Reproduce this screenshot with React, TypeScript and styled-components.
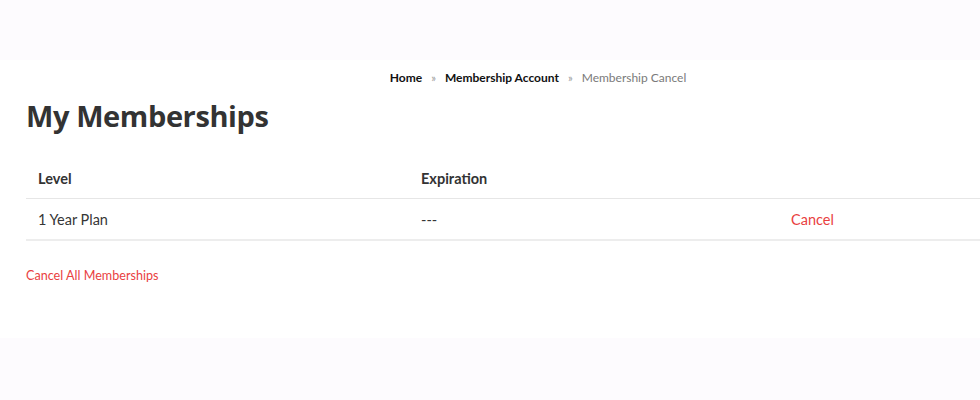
import React from "react";
import styled, { createGlobalStyle } from "styled-components";

const Global = createGlobalStyle`
  html, body { margin: 0; padding: 0; background: #fdfbfe; overflow-x: hidden; }
  body { font-family: Lato, "Liberation Sans", sans-serif; color: #333; }
  * { box-sizing: border-box; }
`;

const Page = styled.div`
  display: flex;
  flex-direction: column;
  width: 980px;
  height: 400px;
  overflow: hidden;
`;

const TopBand = styled.div`
  height: 60px;
  background: #fdfbfe;
  flex-shrink: 0;
`;

const Main = styled.main`
  background: #ffffff;
  height: 278px;
  flex-shrink: 0;
  overflow: hidden;
`;

const Container = styled.div`
  width: 1024px;
  margin-left: 26px;
  display: flex;
  flex-direction: column;
`;

const Breadcrumb = styled.nav`
  display: flex;
  justify-content: center;
  align-items: center;
  gap: 9px;
  padding-top: 9px;
  height: 26px;
  font-size: 12px;
  font-family: Lato, sans-serif;
`;

const Crumb = styled.span<{ $current?: boolean }>`
  color: ${(p) => (p.$current ? "#7a7a7a" : "#111")};
  font-weight: ${(p) => (p.$current ? 400 : 700)};
`;

const Sep = styled.span`
  color: #999;
  font-size: 11px;
`;

const Title = styled.h1`
  margin: 10px 0 0;
  font-family: "Open Sans", sans-serif;
  font-weight: 700;
  font-size: 29px;
  line-height: 40px;
  color: #333;
  letter-spacing: -0.4px;
`;

const Table = styled.table`
  margin-top: 24px;
  width: 1149px;
  border-collapse: collapse;
  font-size: 14.5px;
  font-family: Lato, sans-serif;
`;

const Th = styled.th<{ $w?: number }>`
  text-align: left;
  font-weight: 700;
  color: #333;
  padding: 10px 12px 10px;
  line-height: 18px;
  border-bottom: 1px solid #e6e6e6;
  width: ${(p) => (p.$w ? `${p.$w}px` : "auto")};
`;

const Td = styled.td`
  padding: 12px 12px 10px;
  line-height: 18px;
  color: #363636;
  border-bottom: 2px solid #ededed;
`;

const RedLink = styled.a<{ $size?: number }>`
  color: #e9413f;
  text-decoration: none;
  font-size: ${(p) => p.$size ?? 14.5}px;
  cursor: pointer;
`;

const Footer = styled.div`
  margin-top: 25px;
  line-height: 16px;
`;

const BottomBand = styled.div`
  flex: 1;
  background: #fdfbfe;
`;

export default function App() {
  return (
    <>
      <Global />
      <Page>
        <TopBand />
        <Main>
          <Container>
            <Breadcrumb>
              <Crumb>Home</Crumb>
              <Sep>»</Sep>
              <Crumb>Membership Account</Crumb>
              <Sep>»</Sep>
              <Crumb $current>Membership Cancel</Crumb>
            </Breadcrumb>
            <Title>My Memberships</Title>
            <Table>
              <thead>
                <tr>
                  <Th $w={383}>Level</Th>
                  <Th $w={370}>Expiration</Th>
                  <Th></Th>
                </tr>
              </thead>
              <tbody>
                <tr>
                  <Td>1 Year Plan</Td>
                  <Td>---</Td>
                  <Td>
                    <RedLink>Cancel</RedLink>
                  </Td>
                </tr>
              </tbody>
            </Table>
            <Footer>
              <RedLink $size={12.6}>Cancel All Memberships</RedLink>
            </Footer>
          </Container>
        </Main>
        <BottomBand />
      </Page>
    </>
  );
}
